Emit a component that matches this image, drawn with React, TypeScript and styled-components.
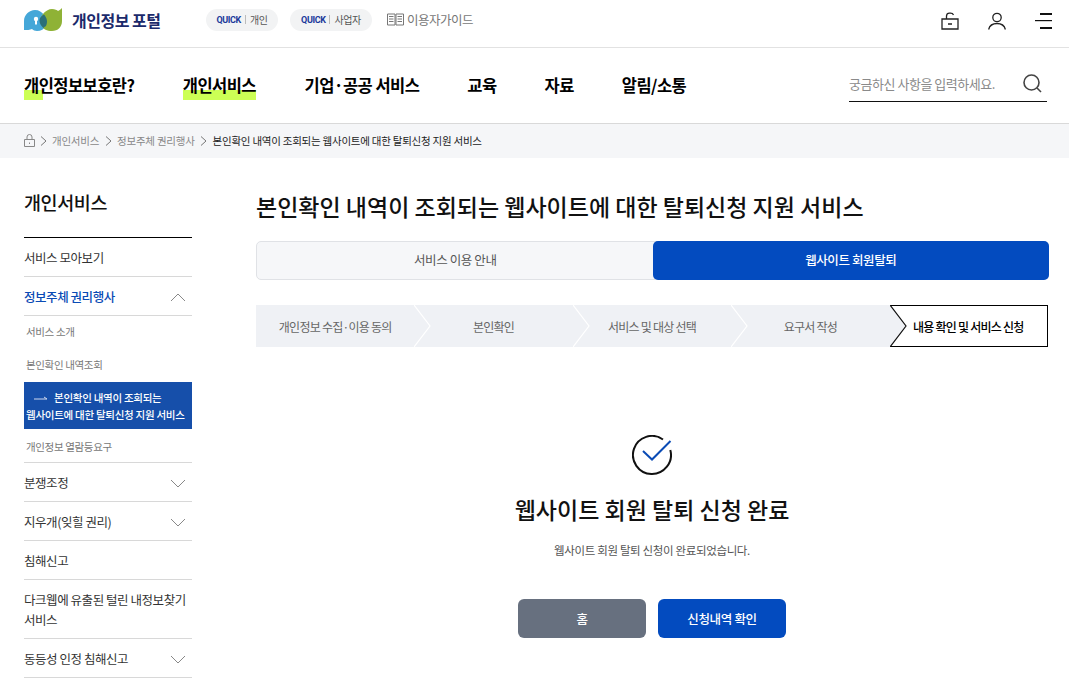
import { createGlobalStyle, styled } from 'styled-components'

const GlobalStyle = createGlobalStyle`
  html, body {
    margin: 0;
    padding: 0;
    background: #fff;
    overflow: hidden;
  }
  body {
    font-family: 'Noto Sans CJK KR', 'Noto Sans', sans-serif;
    color: #111;
  }
  * { box-sizing: border-box; }
`

const Page = styled.div`
  width: 1069px;
  height: 686px;
  overflow: hidden;
`

const TopBar = styled.div`
  height: 48px;
  border-bottom: 1px solid #e2e2e2;
  display: flex;
  align-items: center;
  padding: 0 17px 0 24px;
`

const Logo = styled.a`
  display: flex;
  align-items: center;
  gap: 9px;
  width: 182px;
  margin-top: -8px;
  font-size: 16px;
  font-weight: 700;
  letter-spacing: -0.5px;
  color: #1b2a6b;
`

const QuickChip = styled.a<{ $width: number }>`
  width: ${p => p.$width}px;
  height: 22px;
  border-radius: 11px;
  background: #f2f3f4;
  display: flex;
  align-items: center;
  justify-content: center;
  margin-top: -8px;
  margin-right: 12px;
  font-size: 10px;
  letter-spacing: -0.4px;
  color: #555;
  gap: 4px;
  b {
    font-family: 'Roboto', sans-serif;
    font-size: 9px;
    color: #1b3a9b;
    font-weight: 700;
  }
  i {
    width: 1px;
    height: 9px;
    background: #bbb;
  }
`

const GuideLink = styled.a`
  display: flex;
  align-items: center;
  gap: 3px;
  margin: -8px 0 0 3px;
  font-size: 12.5px;
  letter-spacing: -0.5px;
  color: #777;
`

const TopIcons = styled.div`
  margin-left: auto;
  margin-top: -6px;
  display: flex;
  align-items: center;
  gap: 29px;
`

const NavBar = styled.div`
  height: 76px;
  border-bottom: 1px solid #d9d9d9;
  display: flex;
  align-items: center;
  padding: 0 22px 0 24px;
`

const NavItem = styled.a<{ $gap: number; $mark?: string }>`
  position: relative;
  margin-top: -1px;
  margin-right: ${p => p.$gap}px;
  font-size: 16.5px;
  font-weight: 700;
  letter-spacing: -0.55px;
  line-height: 24px;
  color: #000;
  white-space: nowrap;
  span {
    position: relative;
  }
  &::before {
    content: '';
    position: absolute;
    left: 0;
    bottom: -3px;
    height: 10px;
    width: ${p => p.$mark ?? '0'};
    background: #ccff55;
  }
`

const SearchBox = styled.div`
  margin-left: auto;
  width: 198px;
  height: 32px;
  border-bottom: 1.5px solid #111;
  display: flex;
  align-items: center;
  justify-content: space-between;
  padding: 0 5px 3px 0;
  font-size: 13px;
  letter-spacing: -0.47px;
  color: #8a8a8a;
`

const Breadcrumb = styled.div`
  height: 34px;
  background: #f5f6f8;
  display: flex;
  align-items: center;
  padding: 0 0 1px 24px;
  font-size: 10.5px;
  letter-spacing: -0.24px;
  color: #888;
  gap: 4.5px;
  strong {
    color: #222;
    font-weight: 400;
  }
`

const HomeIcon = styled.svg`
  margin-right: -1px;
`

const Body = styled.div`
  display: flex;
  padding: 0 20px 0 24px;
`

const Sidebar = styled.aside`
  width: 168px;
  flex-shrink: 0;
  margin-right: 64px;
`

const SideTitle = styled.h2`
  margin: 0;
  height: 80px;
  padding-top: 31px;
  border-bottom: 1px solid #000;
  font-size: 18.5px;
  line-height: 26px;
  font-weight: 500;
  letter-spacing: -0.4px;
  color: #111;
`

const SideItem = styled.div<{ $active?: boolean }>`
  border-bottom: 1px solid #d8d8d8;
  padding: 10px 0 8px;
  display: flex;
  align-items: center;
  justify-content: space-between;
  font-size: 12.5px;
  line-height: 20px;
  letter-spacing: -0.45px;
  color: ${p => (p.$active ? '#0a4bb5' : '#333')};
  font-weight: ${p => (p.$active ? 500 : 400)};
`

const Caret = styled.svg`
  flex-shrink: 0;
  margin-right: 6px;
`

const SubList = styled.div`
  border-bottom: 1px solid #d8d8d8;
`

const SubItem = styled.div<{ $low?: boolean }>`
  height: 33px;
  padding: ${p => (p.$low ? '2px 0 0 2px' : '0 0 3px 2px')};
  display: flex;
  align-items: center;
  font-size: 10.5px;
  letter-spacing: -0.35px;
  color: #777;
`

const SubActive = styled.div`
  background: #164faa;
  height: 47px;
  padding: 7px 0 0 2px;
  font-size: 10.5px;
  line-height: 17px;
  letter-spacing: -0.27px;
  font-weight: 500;
  color: #fff;
  white-space: nowrap;
  svg {
    margin: 0 6px 2px 8px;
    vertical-align: middle;
  }
`

const Main = styled.main`
  flex: 1;
  min-width: 0;
`

const PageTitle = styled.h1`
  margin: 0;
  height: 83px;
  padding-top: 31px;
  font-size: 23px;
  line-height: 34px;
  font-weight: 500;
  color: #111;
`

const Tabs = styled.div`
  display: flex;
  height: 39px;
  border: 1px solid #e0e2e6;
  border-radius: 5px;
  background: #f6f7f9;
`

const Tab = styled.a<{ $on?: boolean }>`
  flex: 1;
  margin: ${p => (p.$on ? '-1px' : '0')};
  padding-bottom: 2px;
  display: flex;
  align-items: center;
  justify-content: center;
  border-radius: 5px;
  font-size: 12.5px;
  letter-spacing: -0.4px;
  font-weight: ${p => (p.$on ? 500 : 400)};
  background: ${p => (p.$on ? '#034bbf' : 'transparent')};
  color: ${p => (p.$on ? '#fff' : '#555')};
`

const Steps = styled.ol`
  list-style: none;
  margin: 25px 1px 0 0;
  padding: 0;
  display: flex;
  height: 42px;
`

const Step = styled.li<{ $on?: boolean }>`
  position: relative;
  width: 20%;
  display: flex;
  align-items: center;
  justify-content: center;
  background: ${p => (p.$on ? '#fff' : '#eff1f5')};
  border: ${p => (p.$on ? '1px solid #000' : '0')};
  border-left: 0;
  font-size: 12px;
  letter-spacing: -0.75px;
  color: ${p => (p.$on ? '#000' : '#666')};
  font-weight: ${p => (p.$on ? 500 : 400)};
  white-space: nowrap;
`

const StepArrow = styled.svg`
  position: absolute;
  top: 0;
  left: 100%;
  z-index: 1;
`

const Done = styled.section`
  display: flex;
  flex-direction: column;
  align-items: center;
  padding: 88px 1px 0 0;
`

const DoneTitle = styled.h3`
  margin: 17px 0 0;
  font-size: 23px;
  line-height: 34px;
  font-weight: 500;
  color: #111;
`

const DoneText = styled.p`
  margin: 16px 0 0;
  font-size: 11.5px;
  line-height: 16px;
  letter-spacing: -0.35px;
  color: #555;
`

const Buttons = styled.div`
  margin-top: 41px;
  display: flex;
  gap: 12px;
`

const Button = styled.a<{ $primary?: boolean }>`
  width: 128px;
  height: 39px;
  border-radius: 6px;
  display: flex;
  align-items: center;
  justify-content: center;
  font-size: 12.5px;
  font-weight: 500;
  letter-spacing: -0.35px;
  color: #fff;
  background: ${p => (p.$primary ? '#034bbf' : '#67707f')};
`

const BreadArrow = () => (
  <svg width="9" height="10" viewBox="0 0 9 10" fill="none" stroke="#777" strokeWidth="1">
    <path d="M2 .5l5 4.500-5 4.500" />
  </svg>
)

const CaretIcon = ({ up }: { up?: boolean }) => (
  <Caret width="16" height="9" viewBox="0 0 16 9" fill="none" stroke="#888" strokeWidth="1">
    <path d={up ? 'M1 8l7-7 7 7' : 'M1 1l7 7 7-7'} />
  </Caret>
)

const stepNames = ['개인정보 수집·이용 동의', '본인확인', '서비스 및 대상 선택', '요구서 작성']

export default function App() {
  return (
    <Page>
      <GlobalStyle />
      <TopBar>
        <Logo>
          <svg width="39" height="24" viewBox="0 0 39 24">
            <path d="M0 22V13C0 7 5 2 11 2c4 0 7 2 9 5 3 3 4 7 2 11-2 3-5 5-9 5-2 0-4-1-5-2-2 1-5 1-8 1z" fill="#45a7d8" />
            <path d="M38 0v13c0 6-4 10-10 10-5 0-9-2-10-5-3-4-2-8 1-12 2-3 6-5 9-5 3 0 5 1 6 2 2-1 3-2 4-3z" fill="#8fb236" />
            <path d="M20 6.500c3 3.500 4 7.500 2 11.500-1 .5-1.500 1-2.500 2-2.500-2-4-5-4-7.500s1.500-4.500 4.500-6z" fill="#2b6f78" />
            <circle cx="12" cy="11" r="2.200" fill="#fff" />
            <rect x="11" y="11" width="2" height="5.500" fill="#fff" />
          </svg>
          개인정보 포털
        </Logo>
        <QuickChip $width={72}>
          <b>QUICK</b>
          <i />
          개인
        </QuickChip>
        <QuickChip $width={82}>
          <b>QUICK</b>
          <i />
          사업자
        </QuickChip>
        <GuideLink>
          <svg width="17" height="13" viewBox="0 0 17 13" fill="none" stroke="#777" strokeWidth="1">
            <path d="M.5 1h7.500v11H.5zM9 1h7.500v11H9zM2 3.500h4.500M2 6h4.500M2 8.500h4.500M10.500 3.500H15M10.500 6H15M10.500 8.500H15" />
          </svg>
          이용자가이드
        </GuideLink>
        <TopIcons>
          <svg width="18" height="18" viewBox="0 0 18 18" fill="none" stroke="#222" strokeWidth="1.300">
            <path d="M1 7h16v10H1zM5.500 7V4a3 3 0 0 1 3-2.800h1c1.500 0 2.500.6 3 1.800M7 12h4" />
          </svg>
          <svg width="18" height="18" viewBox="0 0 18 18" fill="none" stroke="#222" strokeWidth="1.300">
            <circle cx="9" cy="5.500" r="4.200" />
            <path d="M.6 17.500c1-4 4-6 8.400-6s7.400 2 8.400 6" />
          </svg>
          <svg width="17" height="16" viewBox="0 0 17 16" fill="#111">
            <rect x="5" y="0" width="12" height="2" />
            <rect x="0" y="7" width="17" height="1.200" />
            <rect x="5" y="14" width="12" height="2" />
          </svg>
        </TopIcons>
      </TopBar>

      <NavBar>
        <NavItem $gap={48.5} $mark="19px"><span>개인정보보호란?</span></NavItem>
        <NavItem $gap={48.5} $mark="100%"><span>개인서비스</span></NavItem>
        <NavItem $gap={48}><span>기업·공공 서비스</span></NavItem>
        <NavItem $gap={48}><span>교육</span></NavItem>
        <NavItem $gap={48}><span>자료</span></NavItem>
        <NavItem $gap={0}><span>알림/소통</span></NavItem>
        <SearchBox>
          궁금하신 사항을 입력하세요.
          <svg width="19" height="19" viewBox="0 0 19 19" fill="none" stroke="#444" strokeWidth="1.600">
            <circle cx="8.500" cy="8.500" r="7.500" />
            <path d="M14 14l4 4" />
          </svg>
        </SearchBox>
      </NavBar>

      <Breadcrumb>
        <HomeIcon width="11" height="13" viewBox="0 0 11 13" fill="none" stroke="#888" strokeWidth="1">
          <path d="M.5 5.500h10v7H.5zM3 5.500V3a2.500 2.500 0 0 1 5 0v2.500M5.500 8.500v1.500" />
        </HomeIcon>
        <BreadArrow />
        개인서비스
        <BreadArrow />
        정보주체 권리행사
        <BreadArrow />
        <strong>본인확인 내역이 조회되는 웹사이트에 대한 탈퇴신청 지원 서비스</strong>
      </Breadcrumb>

      <Body>
        <Sidebar>
          <SideTitle>개인서비스</SideTitle>
          <SideItem>서비스 모아보기</SideItem>
          <SideItem $active>
            정보주체 권리행사
            <CaretIcon up />
          </SideItem>
          <SubList>
            <SubItem>서비스 소개</SubItem>
            <SubItem>본인확인 내역조회</SubItem>
            <SubActive>
              <svg width="14" height="5" viewBox="0 0 14 5" fill="none" stroke="#cfd9ee" strokeWidth="1">
                <path d="M0 3h13l-3-2" />
              </svg>
              본인확인 내역이 조회되는
              <br />
              웹사이트에 대한 탈퇴신청 지원 서비스
            </SubActive>
            <SubItem $low>개인정보 열람등요구</SubItem>
          </SubList>
          <SideItem>
            분쟁조정
            <CaretIcon />
          </SideItem>
          <SideItem>
            지우개(잊힐 권리)
            <CaretIcon />
          </SideItem>
          <SideItem>침해신고</SideItem>
          <SideItem>다크웹에 유출된 털린 내정보찾기 서비스</SideItem>
          <SideItem>
            동등성 인정 침해신고
            <CaretIcon />
          </SideItem>
        </Sidebar>

        <Main>
          <PageTitle>본인확인 내역이 조회되는 웹사이트에 대한 탈퇴신청 지원 서비스</PageTitle>
          <Tabs>
            <Tab>서비스 이용 안내</Tab>
            <Tab $on>웹사이트 회원탈퇴</Tab>
          </Tabs>
          <Steps>
            {stepNames.map((name, i) => (
              <Step key={name}>
                {name}
                <StepArrow width="18" height="42" viewBox="0 0 18 42" fill="none">
                  <path d="M0 0l16 21L0 42" fill="#eff1f5" />
                  <path d="M0 0l16 21L0 42" stroke={i === 3 ? '#111' : '#fff'} strokeWidth="1.200" />
                </StepArrow>
              </Step>
            ))}
            <Step $on>내용 확인 및 서비스 신청</Step>
          </Steps>
          <Done>
            <svg width="40" height="40" viewBox="0 0 40 40" fill="none">
              <path d="M31 4.500A19 19 0 1 0 38.300 15" stroke="#111" strokeWidth="2" />
              <path d="M11 16l9 8.500L38.500 6" stroke="#0a4bb5" strokeWidth="2" />
            </svg>
            <DoneTitle>웹사이트 회원 탈퇴 신청 완료</DoneTitle>
            <DoneText>웹사이트 회원 탈퇴 신청이 완료되었습니다.</DoneText>
            <Buttons>
              <Button>홈</Button>
              <Button $primary>신청내역 확인</Button>
            </Buttons>
          </Done>
        </Main>
      </Body>
    </Page>
  )
}
